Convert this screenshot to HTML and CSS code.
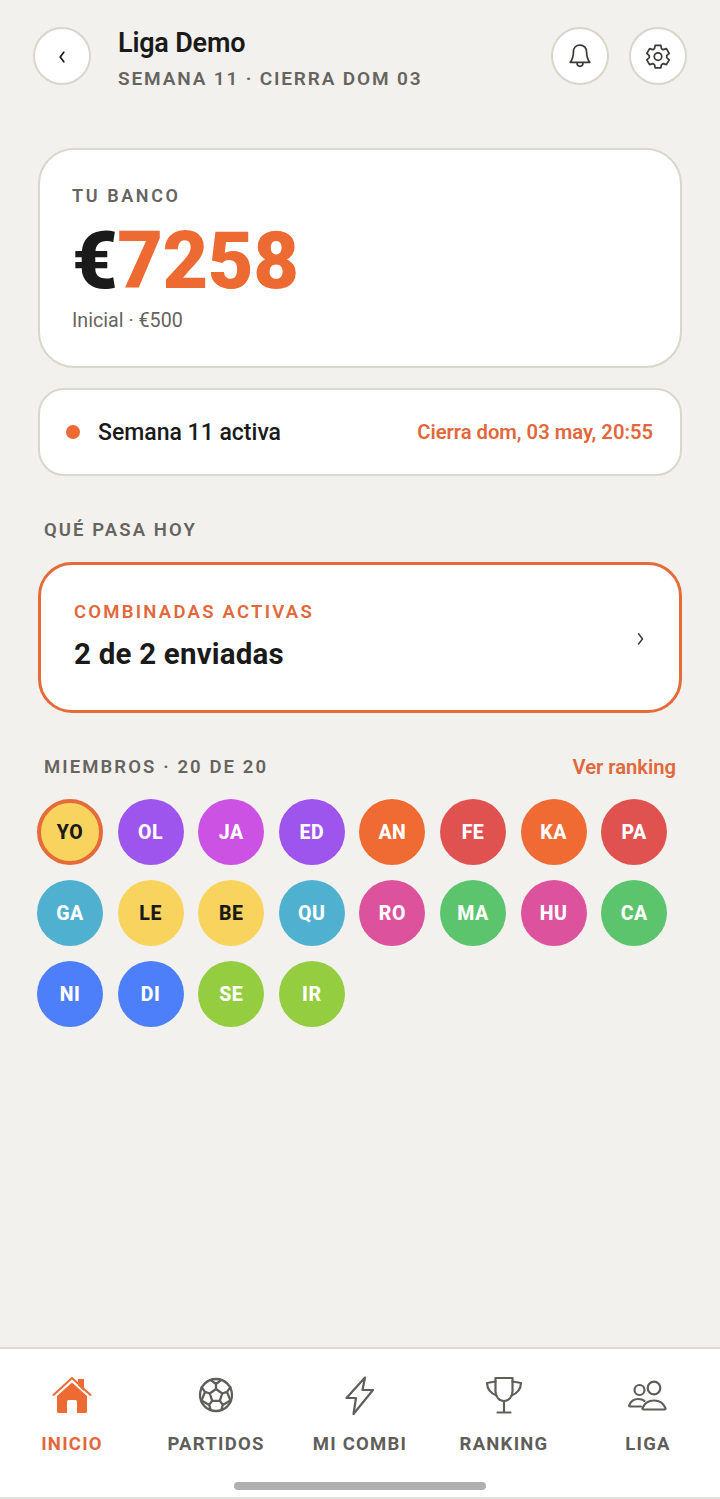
FILE: index.html
```html
<!DOCTYPE html>
<html lang="es">
  <head>
    <meta charset="UTF-8" />
    <meta name="viewport" content="width=device-width, initial-scale=1.0" />
    <title>Liga Demo</title>
    <link rel="stylesheet" href="styles.css">
  </head>
  <body>
    <main class="page">
      <header class="top-bar">
        <button class="round-button back-button" aria-label="Volver">
          <svg width="20" height="20" viewBox="0 0 20 20" fill="none" stroke="#1a1a1a" stroke-width="1.7" stroke-linecap="round" stroke-linejoin="round"><path d="M11.8 6.200 8.200 11l3.600 4.800"/></svg>
        </button>
        <div class="top-title">
          <h1>Liga Demo</h1>
          <p>SEMANA 11 · CIERRA DOM 03</p>
        </div>
        <button class="round-button" aria-label="Avisos">
          <svg width="28" height="28" viewBox="0 0 28 28" fill="none" stroke="#3b3b38" stroke-width="1.7" stroke-linecap="round" stroke-linejoin="round"><path d="M14 3.200c-4.200 0-6.600 3-6.600 6.800 0 5-1 7.600-3.200 10.300h19.600c-2.200-2.700-3.200-5.300-3.200-10.300 0-3.800-2.400-6.800-6.600-6.800Z"/><path d="M11 20.500c0 2.300 1.300 3.800 3 3.800s3-1.500 3-3.800"/></svg>
        </button>
        <button class="round-button" aria-label="Ajustes">
          <svg width="28" height="28" viewBox="0 0 24 24" fill="none" stroke="#3b3b38" stroke-width="1.5" stroke-linecap="round" stroke-linejoin="round"><path d="M9.600 2.900h4.800l.6 2.800 1.500.9 2.700-.9 2.400 4.100-2.100 1.900v1.700l2.100 1.900-2.400 4.100-2.700-.9-1.500.9-.6 2.800H9.600L9 19.400l-1.500-.9-2.700.9-2.400-4.100 2.100-1.900v-1.700L2.400 9.800l2.400-4.100 2.700.9L9 5.700Z"/><circle cx="12" cy="12.500" r="3.200"/></svg>
        </button>
      </header>

      <section class="card bank-card">
        <div class="small-label">TU BANCO</div>
        <div class="bank-amount">€<span>7258</span></div>
        <div class="bank-start">Inicial · €500</div>
      </section>

      <section class="card week-card">
        <span class="week-dot"></span>
        <span class="week-name">Semana 11 activa</span>
        <span class="week-close">Cierra dom, 03 may, 20:55</span>
      </section>

      <h2 class="section-label today-label">QUÉ PASA HOY</h2>

      <section class="card combi-card">
        <div>
          <div class="combi-label">COMBINADAS ACTIVAS</div>
          <div class="combi-value">2 de 2 enviadas</div>
        </div>
        <svg class="combi-arrow" width="16" height="16" viewBox="0 0 16 16" fill="none" stroke="#3b3b38" stroke-width="1.500" stroke-linecap="round" stroke-linejoin="round"><path d="M5.500 2.800 9.500 8l-4 5"/></svg>
      </section>

      <div class="members-head">
        <h2 class="section-label">MIEMBROS · 20 DE 20</h2>
        <a class="ranking-link">Ver ranking</a>
      </div>

      <div class="members">
        <div class="avatar yellow me">YO</div>
        <div class="avatar purple">OL</div>
        <div class="avatar magenta">JA</div>
        <div class="avatar purple">ED</div>
        <div class="avatar orange">AN</div>
        <div class="avatar red">FE</div>
        <div class="avatar orange">KA</div>
        <div class="avatar red">PA</div>
        <div class="avatar teal">GA</div>
        <div class="avatar yellow">LE</div>
        <div class="avatar yellow">BE</div>
        <div class="avatar teal">QU</div>
        <div class="avatar pink">RO</div>
        <div class="avatar green">MA</div>
        <div class="avatar pink">HU</div>
        <div class="avatar green">CA</div>
        <div class="avatar blue">NI</div>
        <div class="avatar blue">DI</div>
        <div class="avatar lime">SE</div>
        <div class="avatar lime">IR</div>
      </div>
    </main>

    <nav class="tab-bar">
      <div class="tabs">
        <a class="tab active">
          <svg width="44" height="44" viewBox="0 0 44 44"><path d="M3.500 24 22 7l18.500 17" fill="none" stroke="#ee6a33" stroke-width="2" stroke-linecap="round" stroke-linejoin="round"/><path d="M28 8h6v12l-6-5.500Z" fill="#ee6a33"/><path d="M22 11.500 37 25v15.500a1.500 1.500 0 0 1-1.500 1.500H27V30.500a1.500 1.500 0 0 0-1.500-1.500h-7a1.500 1.500 0 0 0-1.500 1.500V42H8.500A1.500 1.500 0 0 1 7 40.500V25Z" fill="#ee6a33"/></svg>
          <span>INICIO</span>
        </a>
        <a class="tab">
          <svg width="44" height="44" viewBox="0 0 44 44" fill="none" stroke="#5f5e5a" stroke-width="2.300" stroke-linejoin="round"><circle cx="22" cy="24" r="16"/><path d="M22 18l6.200 4.500-2.400 7.300h-7.600l-2.400-7.300Z"/><path d="M22 18v-5l-5.500-4.200M22 13l5.500-4.200M28.200 22.500l4.800-1.600 4-5.500M33 20.900l3.400 8.500M25.800 29.800l3 4.100-1.500 5.200M28.800 33.900l7.600-4.500M18.200 29.800l-3 4.100 1.500 5.200M15.200 33.900l-7.600-4.500M15.800 22.500l-4.800-1.600-4-5.500M11 20.900l-3.400 8.500"/></svg>
          <span>PARTIDOS</span>
        </a>
        <a class="tab">
          <svg width="44" height="44" viewBox="0 0 44 44" fill="none" stroke="#5f5e5a" stroke-width="2.200" stroke-linecap="round" stroke-linejoin="round"><path d="M27 6.500 8.500 27H18l-2.500 16L35 19H24.500Z"/></svg>
          <span>MI COMBI</span>
        </a>
        <a class="tab">
          <svg width="44" height="44" viewBox="0 0 44 44" fill="none" stroke="#5f5e5a" stroke-width="2.200" stroke-linecap="round" stroke-linejoin="round"><path d="M13.500 7h17v13.500c0 5-3.500 9.500-8.500 9.500s-8.500-4.500-8.500-9.500Z"/><path d="M13.500 10.500 5 12c.2 5 2.800 10 9.500 12.500"/><path d="M30.500 10.500 39 12c-.2 5-2.800 10-9.500 12.500"/><path d="M22 30v11.500M15.500 41.500h13"/></svg>
          <span>RANKING</span>
        </a>
        <a class="tab">
          <svg width="44" height="44" viewBox="0 0 44 44" fill="none" stroke="#5f5e5a" stroke-width="2.200" stroke-linecap="round" stroke-linejoin="round"><circle cx="13.500" cy="19" r="5"/><circle cx="28" cy="17" r="6.300"/><path d="M15 35.500H4c-.6 0-1-.5-.8-1 1.300-4 4.800-6.500 9.300-6.500 2.500 0 4.500.6 6 1.800"/><path d="M17.500 38.500c-.8 0-1.300-.6-1-1.300 1.700-4.300 6-7.700 11.500-7.700s9.800 3.400 11.500 7.700c.3.700-.2 1.300-1 1.300Z"/></svg>
          <span>LIGA</span>
        </a>
      </div>
      <div class="home-indicator"></div>
    </nav>
  </body>
</html>
```

FILE: styles.css
```css
* {
  margin: 0;
  padding: 0;
  box-sizing: border-box;
}

body {
  font-family: Roboto, "Liberation Sans", sans-serif;
  background: #f3f1ed;
  color: #1a1a1a;
  width: 720px;
  height: 1499px;
  display: flex;
  flex-direction: column;
  overflow: hidden;
}

.page {
  flex: 1;
  padding: 0 38px;
}

/* header */
.top-bar {
  display: flex;
  align-items: center;
  gap: 20px;
  margin: 0 -5px 63px;
  height: 85px;
  padding-top: 27px;
}

.round-button {
  width: 58px;
  height: 58px;
  flex: none;
  border-radius: 50%;
  background: #ffffff;
  border: 2px solid #d9d6cc;
  display: flex;
  align-items: center;
  justify-content: center;
}

.top-title {
  flex: 1;
  margin-top: 7px;
  margin-left: 7px;
}

.top-title h1 {
  font-size: 27px;
  font-weight: 600;
  letter-spacing: -0.2px;
  line-height: 30px;
}

.top-title p {
  font-size: 19px;
  font-weight: 600;
  letter-spacing: 1.850px;
  color: #66645f;
  line-height: 24px;
  margin-top: 9px;
}

/* cards */
.card {
  background: #ffffff;
  border: 2px solid #d9d6cc;
}

.bank-card {
  height: 220px;
  border-radius: 36px;
  padding: 36px 32px 0;
  margin-bottom: 20px;
}

.small-label {
  font-size: 18px;
  font-weight: 600;
  letter-spacing: 2.600px;
  color: #66645f;
  line-height: 20px;
}

.bank-amount {
  font-size: 79px;
  font-weight: 900;
  line-height: 80px;
  letter-spacing: -0.5px;
  margin-top: 15px;
  color: #1a1a1a;
}

.bank-amount span {
  color: #ee6a33;
}

.bank-start {
  font-size: 19.700px;
  color: #66645f;
  line-height: 24px;
  margin-top: 8px;
}

.week-card {
  height: 88px;
  border-radius: 26px;
  padding: 0 26px;
  display: flex;
  align-items: center;
}

.week-dot {
  width: 14px;
  height: 14px;
  border-radius: 50%;
  background: #ee6a33;
  margin-right: 18px;
}

.week-name {
  flex: 1;
  font-size: 23px;
  font-weight: 500;
}

.week-close {
  font-size: 20.200px;
  font-weight: 600;
  color: #e2673a;
  margin-right: 1px;
}

.section-label {
  font-size: 18.500px;
  font-weight: 600;
  letter-spacing: 2.100px;
  color: #66645f;
  line-height: 20px;
}

.today-label {
  margin: 44px 0 22px 6px;
}

.combi-card {
  height: 151px;
  border: 3px solid #e56c39;
  border-radius: 34px;
  padding: 0 33px;
  display: flex;
  align-items: center;
  justify-content: space-between;
}

.combi-label {
  font-size: 18.500px;
  font-weight: 600;
  letter-spacing: 2.250px;
  color: #e2673a;
  line-height: 20px;
  margin-top: -2px;
}

.combi-value {
  font-size: 29.500px;
  font-weight: 700;
  letter-spacing: 0.2px;
  line-height: 36px;
  margin-top: 14px;
}

.combi-arrow {
  margin-right: -3px;
  margin-top: 3px;
}

.members-head {
  display: flex;
  justify-content: space-between;
  align-items: center;
  margin: 42px 6px 20px;
}

.ranking-link {
  font-size: 20.200px;
  font-weight: 600;
  color: #e2673a;
}

/* avatars */
.members {
  display: grid;
  grid-template-columns: repeat(8, 66px);
  column-gap: 14.600px;
  row-gap: 15px;
  margin-left: -1px;
}

.avatar {
  height: 66px;
  border-radius: 50%;
  display: flex;
  align-items: center;
  justify-content: center;
  font-size: 19.500px;
  font-weight: 800;
  letter-spacing: 0.5px;
  color: #ffffff;
}

.yellow {
  background: #f8d45f;
  color: #1a1a1a;
}

.me {
  border: 4px solid #e56c39;
}

.purple {
  background: #9d55ee;
}

.magenta {
  background: #cc52e4;
}

.orange {
  background: #f06a33;
}

.red {
  background: #e0524f;
}

.teal {
  background: #4fb0d0;
}

.pink {
  background: #dd529c;
}

.green {
  background: #5cc46c;
}

.blue {
  background: #4d7ffa;
}

.lime {
  background: #95cd40;
}

/* bottom nav */
.tab-bar {
  height: 152px;
  flex: none;
  background: #ffffff;
  border-top: 2px solid #dcdad2;
  border-bottom: 2px solid #e4e2dc;
}

.tabs {
  display: grid;
  grid-template-columns: repeat(5, 144px);
  padding-top: 22px;
}

.tab {
  display: flex;
  flex-direction: column;
  align-items: center;
  gap: 18px;
  color: #5f5e5a;
}

.tab span {
  font-size: 18.500px;
  font-weight: 700;
  letter-spacing: 1.250px;
  line-height: 22px;
}

.tab.active {
  color: #e2673a;
}

.home-indicator {
  width: 252px;
  height: 8px;
  border-radius: 4px;
  background: #b0b0b0;
  margin: 27px auto 0;
}
```
